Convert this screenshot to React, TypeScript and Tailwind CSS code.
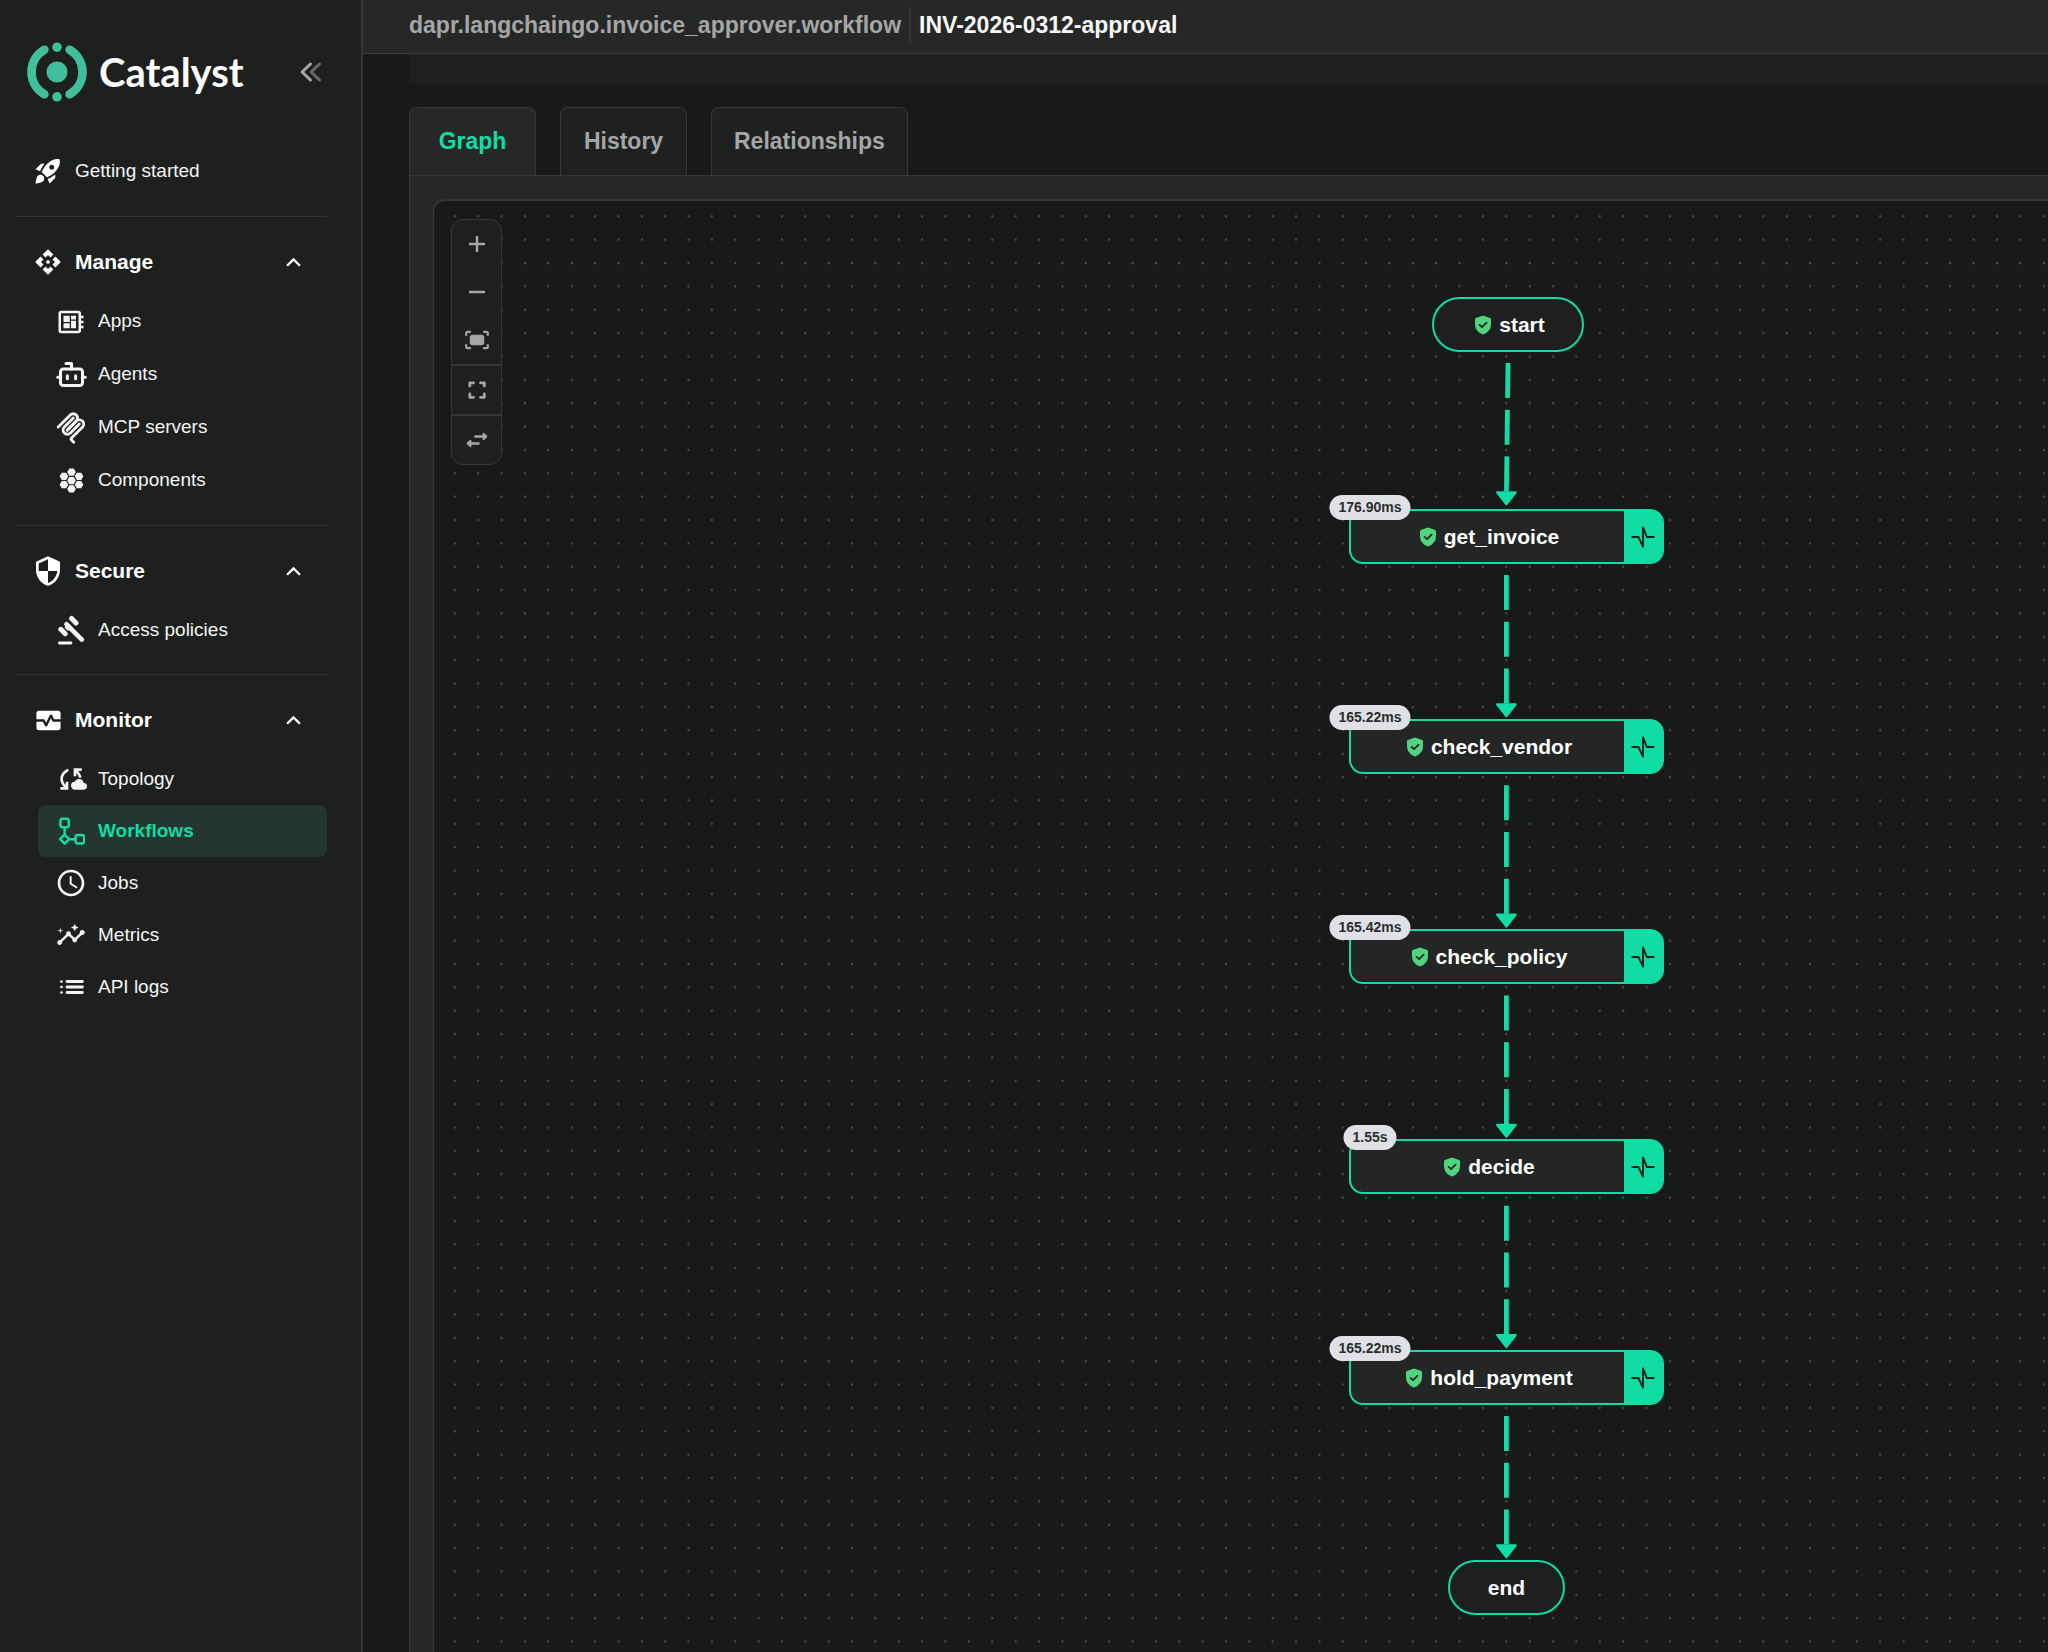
import { useState } from "react";
import type { ReactNode } from "react";
import clsx from "clsx";
import { Bot } from "lucide-react";
import {
  MdAccessTime,
  MdApi,
  MdCloudSync,
  MdDeveloperBoard,
  MdHive,
  MdInsights,
  MdKeyboardArrowUp,
  MdMonitorHeart,
  MdRocketLaunch,
  MdSecurity,
} from "react-icons/md";

const LogoMark = () => (
  <svg viewBox="0 0 60 60" className="size-15" fill="none" aria-hidden="true">
    <circle cx="30" cy="30" r="10.5" fill="#41bf9c" />
    <circle cx="30" cy="5.2" r="4.8" fill="#41bf9c" />
    <circle cx="30" cy="54.8" r="4.8" fill="#41bf9c" />
    <path
      d="M17.4 7.7a25.7 25.7 0 0 0 0 44.6M42.6 7.7a25.7 25.7 0 0 1 0 44.6"
      stroke="#41bf9c"
      strokeWidth="8.6"
      strokeLinecap="round"
    />
  </svg>
);

const GavelIcon = () => (
  <svg viewBox="0 0 28 30" className="h-[30px] w-7 shrink-0" fill="none" stroke="currentColor" strokeLinecap="round">
    <path d="M2.4 28H14" strokeWidth="2.8" />
    <path d="M9.5 9.3L24.8 24.6" strokeWidth="4.6" />
    <path d="M3.8 14.3L8.2 18.7M14.6 3.5L19 7.9" strokeWidth="5" />
    <path d="M9.6 10.4l3.6 3.6" strokeWidth="6" strokeLinecap="butt" />
  </svg>
);

const McpIcon = () => (
  <svg viewBox="0 0 180 180" className="size-8 shrink-0" fill="none" stroke="currentColor" strokeWidth="16" strokeLinecap="round">
    <path d="M18 84.85L85.88 16.97c9.37-9.37 24.57-9.37 33.94 0c9.38 9.37 9.38 24.57 0 33.94L68.56 102.18" />
    <path d="M69.27 101.47L119.82 50.91c9.38-9.37 24.57-9.37 33.94 0l.36.36c9.37 9.37 9.37 24.56 0 33.94L92.72 146.6c-3.12 3.12-3.12 8.19 0 11.31l12.61 12.61" />
    <path d="M102.85 33.94L52.65 84.15c-9.37 9.37-9.37 24.56 0 33.94c9.37 9.37 24.57 9.37 33.94 0L136.79 67.88" />
  </svg>
);

const WorkflowIcon = () => (
  <svg viewBox="0 0 28 28" className="size-7 shrink-0" fill="none" stroke="currentColor" strokeWidth="2.5" strokeLinejoin="round">
    <rect x="3.4" y="1.8" width="8.4" height="8.4" rx="2.2" />
    <rect x="18.6" y="18" width="8.6" height="8.4" rx="2.2" />
    <path d="M7.6 10v8M12 22.2h6.5" />
    <path d="M7.6 17.7l4.5 4.5l-4.5 4.5L3.1 22.2z" />
  </svg>
);

const LogsIcon = () => (
  <svg viewBox="0 0 27 27" className="size-[27px] shrink-0" fill="none" stroke="currentColor" strokeLinecap="round">
    <path d="M9 7.5h15.4M9 13h15.4M9 18.500h15.4" strokeWidth="2.9" />
    <path d="M3.4 7.5h.1M3.4 13h.1M3.4 18.500h.1" strokeWidth="2.7" />
  </svg>
);

const CollapseIcon = () => (
  <svg viewBox="0 0 24 24" className="size-6" fill="none" strokeWidth="3" strokeLinecap="round" strokeLinejoin="round">
    <path d="M21.5 4l-8.4 8l8.4 8" stroke="#686868" />
    <path d="M12.5 4l-8.4 8l8.4 8" stroke="#a8a8a8" />
  </svg>
);

const ShieldCheck = () => (
  <svg viewBox="0 0 16 20" className="h-5 w-4 shrink-0" fill="none">
    <path d="M8 .4l7.2 2.6q.8.3.8 1.2V9.2q0 7.2-8 10.4q-8-3.2-8-10.4V4.2Q0 3.3.8 3z" fill="#4fd47f" />
    <path d="M4.6 9.8l2.5 2.4l4.5-4.6" stroke="#1f2321" strokeWidth="1.7" strokeLinecap="round" strokeLinejoin="round" />
  </svg>
);

const PulseIcon = () => (
  <svg viewBox="0 0 24 24" className="size-6" fill="none" stroke="#15211d" strokeWidth="1.9" strokeLinejoin="round" strokeLinecap="round">
    <path d="M1.3 12H7.4L12 21.6V2.4L15.8 12H22.7" />
  </svg>
);

const sections = [
  {
    title: "Manage",
    icon: <MdApi className="size-7" />,
    items: [
      { label: "Apps", icon: <MdDeveloperBoard className="size-[30px] shrink-0" /> },
      { label: "Agents", icon: <Bot className="size-[33px] shrink-0" strokeWidth={2.2} /> },
      { label: "MCP servers", icon: <McpIcon /> },
      { label: "Components", icon: <MdHive className="size-[29px] shrink-0" /> },
    ],
    row: "h-[53px]",
  },
  {
    title: "Secure",
    icon: <MdSecurity className="size-8" />,
    items: [{ label: "Access policies", icon: <GavelIcon /> }],
    row: "h-[52px]",
  },
  {
    title: "Monitor",
    icon: <MdMonitorHeart className="size-[29px]" />,
    items: [
      { label: "Topology", icon: <MdCloudSync className="size-8 shrink-0" /> },
      { label: "Workflows", icon: <WorkflowIcon /> },
      { label: "Jobs", icon: <MdAccessTime className="size-8 shrink-0" /> },
      { label: "Metrics", icon: <MdInsights className="size-[30px] shrink-0" /> },
      { label: "API logs", icon: <LogsIcon /> },
    ],
    row: "h-[52px]",
  },
];

const Sidebar = () => {
  const [closed, setClosed] = useState<string[]>([]);
  const toggle = (title: string) =>
    setClosed(closed.includes(title) ? closed.filter((t) => t !== title) : [...closed, title]);

  return (
    <aside className="w-[363px] shrink-0 border-r-2 border-[#363837] bg-[#1e201f] pl-4 pr-[34px]">
      <div className="flex h-[144px] items-center pl-[11px]">
        <LogoMark />
        <span className="pl-3 font-[Lato,sans-serif] text-[40px] leading-[48px] font-bold text-white">Catalyst</span>
        <button type="button" aria-label="Collapse sidebar" className="ml-auto mr-[5px]">
          <CollapseIcon />
        </button>
      </div>
      <nav>
        <a href="#" className="flex h-[54px] items-center pl-4 text-[19px] text-[#f4f4f4]">
          <span className="flex w-8 justify-center text-white">
            <MdRocketLaunch className="size-[30px]" />
          </span>
          <span className="pl-[11px]">Getting started</span>
        </a>
        <div className="h-[18px]" />
        {sections.map((section) => (
          <section key={section.title} className="border-t border-[#333534] pt-[19px] pb-[18px]">
            <button
              type="button"
              onClick={() => toggle(section.title)}
              aria-expanded={!closed.includes(section.title)}
              className="flex h-[52px] w-full items-center pl-4 pr-[19px] text-white"
            >
              <span className="flex w-8 justify-center">{section.icon}</span>
              <span className="pl-[11px] text-[21px] font-bold">{section.title}</span>
              <MdKeyboardArrowUp
                className={clsx("ml-auto size-[29px]", closed.includes(section.title) && "rotate-180")}
              />
            </button>
            {!closed.includes(section.title) && (
              <ul className="mt-[7px] ml-[22px]">
                {section.items.map((item) => {
                  const active = item.label === "Workflows";
                  return (
                    <li key={item.label}>
                      <a
                        href="#"
                        className={clsx(
                          "flex items-center rounded-lg pl-[19px] text-[19px]",
                          section.row,
                          active ? "bg-[#243630] font-bold text-[#11dca3]" : "text-[#f4f4f4]"
                        )}
                      >
                        <span className="flex w-7 justify-center">{item.icon}</span>
                        <span className="pl-[13px]">{item.label}</span>
                      </a>
                    </li>
                  );
                })}
              </ul>
            )}
          </section>
        ))}
      </nav>
    </aside>
  );
};

const ControlButton = ({ label, divider, children }: { label: string; divider?: boolean; children: ReactNode }) => (
  <button
    type="button"
    aria-label={label}
    className={clsx("flex w-full items-center justify-center", divider ? "h-[50px] border-t-2 border-[#363837]" : "h-12")}
  >
    <svg viewBox="0 0 26 26" className="size-[26px]" fill="none" stroke="#a6a6a6" strokeWidth="2.5" strokeLinecap="round" strokeLinejoin="round">
      {children}
    </svg>
  </button>
);

const Controls = () => (
  <div className="absolute top-[18px] left-[17px] w-[51px] overflow-hidden rounded-xl border border-[#363837] bg-[#1e201f]">
    <ControlButton label="Zoom in">
      <path d="M13 6v14M6 13h14" />
    </ControlButton>
    <ControlButton label="Zoom out">
      <path d="M6 13h14" />
    </ControlButton>
    <ControlButton label="Fit view">
      <rect x="6.5" y="8.5" width="13" height="9" rx="2" fill="#a6a6a6" strokeWidth="1.5" />
      <path d="M2.2 8V6.2q0-1.4 1.4-1.4H6M20 4.8h2.4q1.4 0 1.4 1.4V8M23.8 18v1.8q0 1.4-1.4 1.4H20M6 21.2H3.6q-1.4 0-1.4-1.4V18" strokeWidth="2.2" />
    </ControlButton>
    <ControlButton label="Full screen" divider>
      <path d="M5.8 9V5.8H9.5M16.5 5.8h3.8V9M20.3 17v3.3H16.5M9.5 20.3H5.8V17" strokeWidth="2.8" />
    </ControlButton>
    <ControlButton label="Change direction" divider>
      <path d="M11.5 9.5H19M7 16.5h7.5" strokeWidth="2.7" />
      <path d="M19.5 6.7l3 2.8l-3 2.8zM6.5 13.7l-3 2.8l3 2.8z" fill="#a6a6a6" strokeWidth="1.8" />
    </ControlButton>
  </div>
);

// canvas coordinates, measured from the inside of the canvas border
const activities = [
  { name: "get_invoice", duration: "176.90ms", x: 915, y: 308 },
  { name: "check_vendor", duration: "165.22ms", x: 915, y: 518 },
  { name: "check_policy", duration: "165.42ms", x: 915, y: 728 },
  { name: "decide", duration: "1.55s", x: 915, y: 938 },
  { name: "hold_payment", duration: "165.22ms", x: 915, y: 1149 },
];

const edges = [
  { x: 1074, y: 162 },
  { x: 1072.4, y: 374 },
  { x: 1072.4, y: 584.3 },
  { x: 1072.4, y: 794.5 },
  { x: 1072.4, y: 1004.8 },
  { x: 1072.4, y: 1215 },
];

const Edges = () => (
  <svg className="absolute inset-0 size-full" aria-hidden="true">
    <defs>
      <pattern id="dots" x="9.2" y="3.6" width="23.365" height="23.365" patternUnits="userSpaceOnUse">
        <circle cx="11.68" cy="11.68" r="1.17" fill="#4b4d4c" />
      </pattern>
    </defs>
    <rect width="100%" height="100%" fill="url(#dots)" />
    {edges.map((edge) => (
      <g key={edge.y} stroke="#11dca3" fill="#11dca3">
        <path d={`M${edge.x} ${edge.y}L1072.4 ${edge.y + 132}`} strokeWidth="4.8" strokeDasharray="35 11.7" />
        <path d={`M1063 ${edge.y + 129.3}h18.8l-9.4 12z`} strokeWidth="2" strokeLinejoin="round" />
      </g>
    ))}
  </svg>
);

const ActivityNode = ({ name, duration, x, y }: (typeof activities)[number]) => (
  <div
    className="absolute flex h-[55px] w-[315px] rounded-[14px] border-2 border-[#11dca3] bg-[#232625]"
    style={{ left: x, top: y }}
  >
    <span className="absolute -top-4 left-[19px] -translate-x-1/2 rounded-full bg-[#dfe1e7] px-[9px] text-[14px] leading-[25px] font-bold text-[#2b2d2c]">
      {duration}
    </span>
    <div className="flex flex-1 items-center justify-center gap-2 pl-1 text-[21px] font-bold text-white">
      <ShieldCheck />
      {name}
    </div>
    <button
      type="button"
      aria-label={`Show ${name} activity`}
      className="flex w-[38px] items-center justify-center rounded-r-[10px] bg-[#11dca3]"
    >
      <PulseIcon />
    </button>
  </div>
);

const Canvas = () => (
  <div className="relative min-h-0 flex-1 overflow-hidden rounded-tl-xl border-t-2 border-l border-[#363837] bg-[#181a19]">
    <Edges />
    <div className="absolute top-24 left-[998px] flex h-[55px] w-[152px] items-center justify-center gap-2 rounded-full border-2 border-[#11dca3] bg-[#1e201f] pl-1 text-[21px] font-bold text-white">
      <ShieldCheck />
      start
    </div>
    {activities.map((activity) => (
      <ActivityNode key={activity.name} {...activity} />
    ))}
    <div className="absolute top-[1359px] left-[1014px] flex h-[55px] w-[117px] items-center justify-center rounded-full border-2 border-[#11dca3] bg-[#1e201f] text-[21px] font-bold text-white">
      end
    </div>
    <Controls />
  </div>
);

const tabs = ["Graph", "History", "Relationships"];

const App = () => {
  const [tab, setTab] = useState("Graph");

  return (
    <div className="flex h-screen overflow-hidden bg-[#181a19] font-['Liberation_Sans',Arial,sans-serif]">
      <Sidebar />
      <main className="flex min-w-0 flex-1 flex-col">
        <header className="flex items-center border-b border-[#3a3c3b] bg-[#262827] pt-[7px] pb-[10px] pl-[46px] text-[23px] font-bold">
          <a href="#" className="border-r-2 border-[#363837] pr-2 leading-[36px] text-[#a6a6a6]">
            dapr.langchaingo.invoice_approver.workflow
          </a>
          <h1 className="pl-2 leading-[36px] text-[#f8f8f8]">INV-2026-0312-approval</h1>
        </header>
        <div className="ml-[46px] h-[30px] shrink-0 bg-[#1e201f]" />
        <div role="tablist" className="mt-[23px] ml-[46px] flex gap-6">
          {tabs.map((name) => (
            <button
              key={name}
              type="button"
              role="tab"
              aria-selected={tab === name}
              onClick={() => setTab(name)}
              className={clsx(
                "h-[68px] min-w-[127px] rounded-t-lg border border-b-0 border-[#363837] px-[22px] text-[23px] font-bold",
                tab === name ? "bg-[#262827] text-[#11dca3]" : "bg-[#1e2120] text-[#a6a6a6]"
              )}
            >
              {name}
            </button>
          ))}
        </div>
        <div className="ml-[46px] flex min-h-0 flex-1 flex-col border-t border-l border-[#363837] bg-[#262827] pt-[23px] pl-[23px]">
          <Canvas />
        </div>
      </main>
    </div>
  );
};

export default App;
